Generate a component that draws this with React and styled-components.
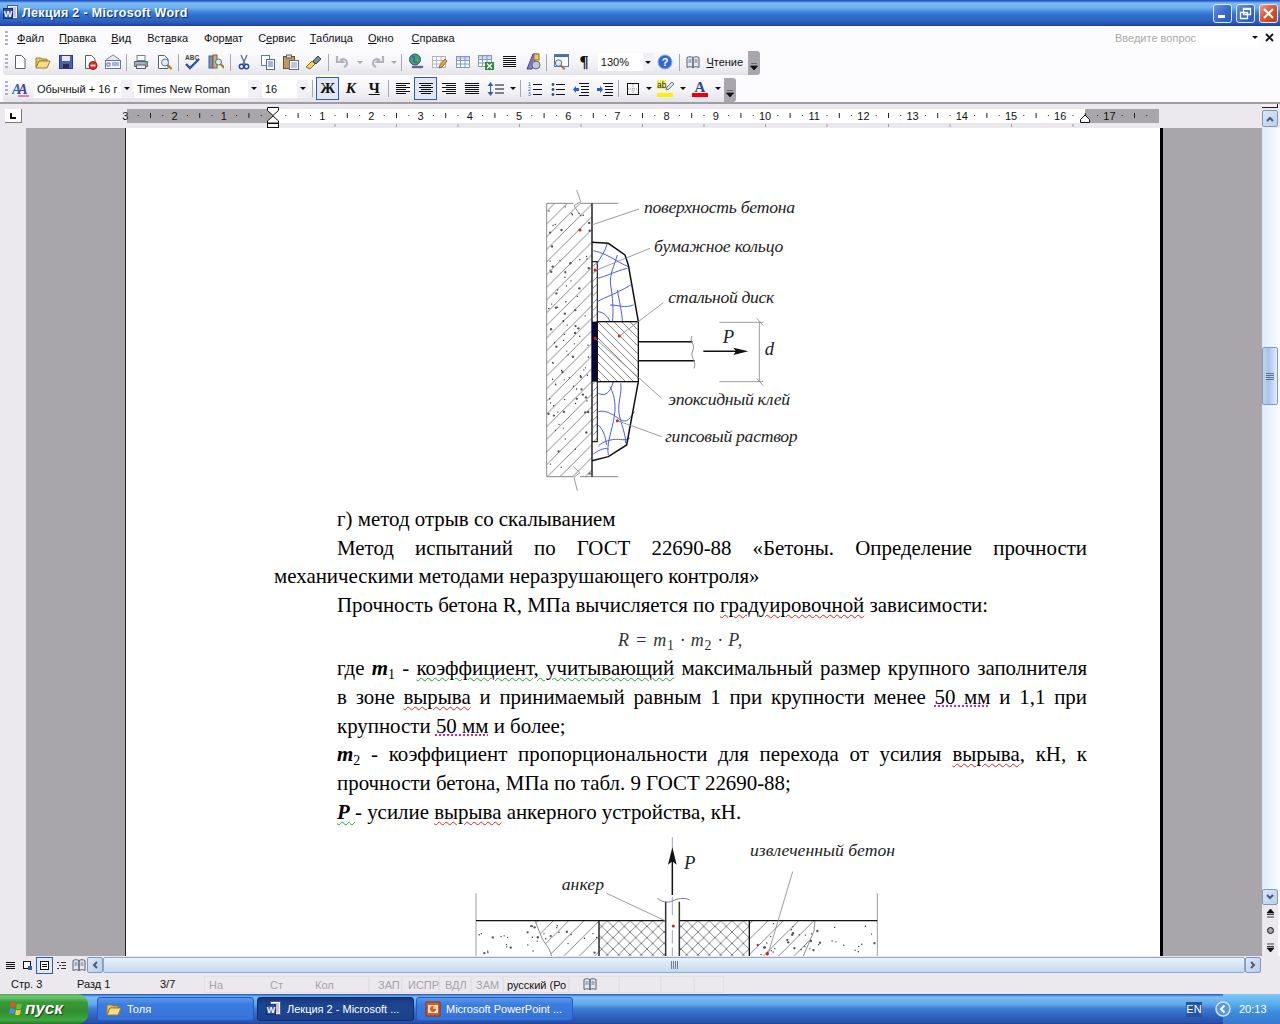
import React from "react";
import styled, { createGlobalStyle } from "styled-components";

const Global = createGlobalStyle`
  html, body { margin: 0; padding: 0; overflow: hidden; background: #ebe9ed; }
`;

const uiFont = `"Liberation Sans", Arial, sans-serif`;
const serif = `"Liberation Serif", "Times New Roman", serif`;

const Win = styled.div`
  width: 1280px;
  height: 1024px;
  display: flex;
  flex-direction: column;
  overflow: hidden;
  font-family: ${uiFont};
  font-size: 11px;
  color: #111;
`;

/* title bar */
const TitleBar = styled.div`
  height: 26px;
  flex: none;
  display: flex;
  align-items: center;
  padding: 0 2px 0 3px;
  box-sizing: border-box;
  background: linear-gradient(180deg, #2150c0 0, #2c62d0 1px, #7cbcf0 3px, #6cb0ec 8px, #3e86dc 12px, #3070cc 15px, #2c62c0 21px, #2850b0 24px, #1c3c9c 26px);
`;
const TitleText = styled.div`
  margin-left: 3px;
  font: bold 12.5px "Liberation Sans", sans-serif;
  letter-spacing: 0.32px;
  color: #fff;
  text-shadow: 1px 1px 0 #0f2c80;
  flex: 1;
`;
const WinBtn = styled.div`
  width: 19px;
  height: 19px;
  margin-left: 4px;
  border: 1px solid #dfe8fa;
  border-radius: 3px;
  box-sizing: border-box;
  display: flex;
  align-items: center;
  justify-content: center;
  background: ${(p) =>
    p.$close
      ? "linear-gradient(135deg, #f0a088, #d85a30 45%, #b83c18)"
      : "linear-gradient(135deg, #6c94e4, #3a6cd0 50%, #2c56b8)"};
`;

/* menu */
const MenuBar = styled.div`
  height: 25px;
  flex: none;
  box-sizing: border-box;
  padding: 0 0 2px 5px;
  display: flex;
  align-items: center;
  background: #fcfbfe;
`;
const Grip = styled.div`
  width: 3px;
  height: ${(p) => p.$h || 14}px;
  flex: none;
  background: repeating-linear-gradient(180deg, #b4b2ba 0 2px, transparent 2px 4px);
`;
const MenuItem = styled.span`
  margin-left: ${(p) => p.$ml}px;
  u { text-underline-offset: 1px; }
`;
const MenuSpacer = styled.div`
  flex: 1;
`;
const HelpBox = styled.div`
  width: 147px;
  height: 18px;
  background: #fff;
  display: flex;
  align-items: center;
  box-sizing: border-box;
  padding-left: 2px;
  color: #a8a8a8;
`;
const HelpText = styled.span`
  flex: 1;
`;
const CloseDoc = styled.div`
  width: 20px;
  height: 18px;
  display: flex;
  align-items: center;
  justify-content: center;
`;

/* toolbars */
const BarRow = styled.div`
  height: ${(p) => p.$h}px;
  flex: none;
  box-sizing: border-box;
  padding-top: ${(p) => p.$pt || 0}px;
  background: #fcfbfe;
  display: flex;
  align-items: flex-start;
`;
const Toolbar = styled.div`
  height: 24px;
  width: ${(p) => p.$w}px;
  margin-left: 3px;
  box-sizing: border-box;
  padding: 0 0 ${(p) => p.$pb || 0}px 2px;
  display: flex;
  align-items: center;
  background: linear-gradient(180deg, #fbfbfd 0%, #f3f2f6 55%, #e4e3e9 100%);
  border-radius: 3px 0 0 3px;
  position: relative;
`;
const ToolBtn = styled.div`
  width: ${(p) => p.$w || 23.3}px;
  height: 23px;
  flex: none;
  box-sizing: border-box;
  display: flex;
  align-items: center;
  justify-content: center;
  ${(p) => p.$on && "border: 1px solid #2f5ea8; background: #e1e6f2;"}
  ${(p) => p.$ml && `margin-left: ${p.$ml}px;`}
`;
const Sep = styled.div`
  width: ${(p) => p.$w || 5}px;
  height: 17px;
  flex: none;
  background: linear-gradient(#a9a8ae, #a9a8ae) center / 1px 100% no-repeat;
`;
const Arrow = styled.div`
  width: ${(p) => p.$w || 11}px;
  height: 14px;
  flex: none;
  display: flex;
  align-items: center;
  justify-content: center;
  &::after {
    content: "";
    border-left: 3px solid transparent;
    border-right: 3px solid transparent;
    border-top: 3px solid ${(p) => (p.$off ? "#a8a8ae" : "#111")};
  }
`;
const Combo = styled.div`
  width: ${(p) => p.$w}px;
  height: 18px;
  flex: none;
  margin-left: ${(p) => p.$ml || 0}px;
  box-sizing: border-box;
  background: #fff;
  display: flex;
  align-items: center;
  padding-left: 3px;
`;
const ComboText = styled.span`
  flex: 1;
  white-space: nowrap;
`;
const ComboArrow = styled(Arrow)`
  height: 18px;
  background: #f1f0f4;
`;
const Chevron = styled.div`
  position: absolute;
  right: -12px;
  top: 0;
  bottom: 0;
  width: 12px;
  border-radius: 0 3px 3px 0;
  background: #a9a7ad;
  display: flex;
  align-items: flex-end;
  justify-content: center;
  padding-bottom: 4px;
  box-sizing: border-box;
`;
const ReadText = styled.span`
  margin-left: 1px;
  white-space: nowrap;
`;
const GlyphBold = styled.span`
  font: ${(p) => p.$style || "bold"} 15px ${serif};
  ${(p) => p.$u && "text-decoration: underline; text-underline-offset: 1px;"}
`;
const Pilcrow = styled.span`
  font: bold 17px ${serif};
`;

/* ruler */
const RulerRow = styled.div`
  height: 26px;
  flex: none;
  position: relative;
  background: #ebe9ed;
  border-top: 2px solid #a09ea4;
  box-sizing: border-box;
`;
const RulerLayout = styled.div`
  display: flex;
  padding: 5px 0 0 5px;
`;
const TabCorner = styled.div`
  width: 17px;
  height: 14px;
  background: #fff;
  border-bottom: 1px solid #777;
  border-right: 1px solid #777;
  box-sizing: border-box;
  display: flex;
  align-items: center;
  justify-content: center;
`;
const RulerBand = styled.div`
  width: ${(p) => p.$w}px;
  height: 14px;
  margin-left: ${(p) => p.$ml || 0}px;
  background: ${(p) => (p.$gray ? "#a8a6aa" : "#fff")};
`;
const RulerMarks = styled.svg`
  position: absolute;
  left: 0;
  top: 0;
`;
const SplitBox = styled.div`
  position: absolute;
  right: 2px;
  top: 0;
  width: 16px;
  height: 4px;
  background: #f2f1f5;
  border-right: 1px solid #222;
  border-bottom: 1px solid #222;
  box-sizing: border-box;
`;
const ScrollBtn = styled.div`
  width: 16px;
  height: ${(p) => p.$h || 16}px;
  flex: none;
  box-sizing: border-box;
  border: 1px solid #8298b8;
  border-radius: 2px;
  background: linear-gradient(135deg, #dbe7f8, #b8cfea);
  display: flex;
  align-items: center;
  justify-content: center;
`;
const RulerScrollBtn = styled(ScrollBtn)`
  position: absolute;
  right: 2px;
  top: 6px;
  height: 17px;
`;

/* main area */
const Main = styled.div`
  height: 828px;
  flex: none;
  display: flex;
`;
const LeftStrip = styled.div`
  width: 26px;
  flex: none;
  background: #ebe9ed;
`;
const DocArea = styled.div`
  flex: 1;
  background: #a8a6aa;
  padding-left: 99px;
  overflow: hidden;
`;
const Page = styled.div`
  width: 1038px;
  height: 100%;
  box-sizing: border-box;
  background: #fff;
  border-left: 1px solid #222;
  border-right: 3px solid #000;
  padding: 62px 0 0 148px;
  overflow: hidden;
`;
const Figure = styled.svg`
  display: block;
  margin-left: ${(p) => p.$ml}px;
  margin-top: ${(p) => p.$mt || 0}px;
`;
const TextBlock = styled.div`
  width: 813px;
  margin-top: ${(p) => p.$mt || 0}px;
  font-family: ${serif};
  font-size: 20.9px;
  color: #000;
`;
const Line = styled.div`
  height: 28.7px;
  line-height: 28.7px;
  padding-left: ${(p) => (p.$indent ? 63 : 0)}px;
  text-align: ${(p) => (p.$just ? "justify" : "left")};
  text-align-last: ${(p) => (p.$just ? "justify" : "left")};
`;
const FormulaLine = styled.div`
  height: 34.5px;
  line-height: 38px;
  text-align: center;
`;
const FormulaText = styled.span`
  font-size: 18px;
  font-style: italic;
  color: #333;
  letter-spacing: 0.8px;
`;
const Var = styled.i`
  font-weight: bold;
`;
const Sub = styled.sub`
  font-size: 14px;
  line-height: 0;
  vertical-align: -4px;
  font-style: normal;
  font-weight: normal;
`;
const Wavy = styled.span`
  text-decoration: underline wavy ${(p) => p.$c};
  text-decoration-thickness: 1px;
  text-underline-offset: 2px;
`;
const Dotted = styled.span`
  text-decoration: underline dotted #d020d0;
  text-underline-offset: 2px;
`;

/* scrollbars */
const VScroll = styled.div`
  width: 18px;
  flex: none;
  box-sizing: border-box;
  padding-right: 2px;
  display: flex;
  flex-direction: column;
  background: linear-gradient(90deg, #dfeafa, #fbfdff);
`;
const VTrack = styled.div`
  height: ${(p) => (p.$h ? `${p.$h}px` : "auto")};
  flex: ${(p) => (p.$h ? "none" : 1)};
`;
const VThumb = styled.div`
  height: 58px;
  flex: none;
  box-sizing: border-box;
  border: 1px solid #8298b8;
  border-radius: 2px;
  background: linear-gradient(90deg, #c0d4ee, #a8c4e8 40%, #e4eefa);
  display: flex;
  align-items: center;
  justify-content: center;
`;
const NavBtn = styled.div`
  height: 17px;
  flex: none;
  background: #ebe9ed;
  display: flex;
  align-items: center;
  justify-content: center;
`;
const HScroll = styled.div`
  height: 18px;
  flex: none;
  display: flex;
  align-items: center;
  background: #ebe9ed;
`;
const ViewBtn = styled.div`
  width: 17px;
  height: 17px;
  flex: none;
  box-sizing: border-box;
  display: flex;
  align-items: center;
  justify-content: center;
  ${(p) => p.$on && "border: 1px solid #2f5ea8; background: #e4e8f4;"}
`;
const ViewIcons = styled.div`
  display: flex;
  align-items: center;
  padding-left: 2px;
  width: 87px;
  box-sizing: border-box;
`;
const HThumb = styled.div`
  flex: 1;
  height: 16px;
  box-sizing: border-box;
  border: 1px solid #92a8c8;
  border-radius: 2px;
  background: linear-gradient(180deg, #eaf2fc, #c4d8f0);
  display: flex;
  align-items: center;
  justify-content: center;
`;
const HEnd = styled.div`
  width: 19px;
  flex: none;
`;

/* status bar */
const StatusBar = styled.div`
  height: 20px;
  flex: none;
  display: flex;
  align-items: center;
  background: #ebe9ed;
`;
const StatusCell = styled.div`
  width: ${(p) => p.$w}px;
  height: 17px;
  flex: none;
  box-sizing: border-box;
  padding-left: ${(p) => p.$pl || 0}px;
  line-height: 17px;
  white-space: nowrap;
  color: ${(p) => (p.$off ? "#a4a4a8" : "#111")};
  ${(p) => p.$box && "border: 1px solid #e3e1e6;"}
  display: flex;
`;
const StatusPart = styled.span`
  width: ${(p) => p.$w}px;
  flex: none;
`;

/* taskbar */
const Taskbar = styled.div`
  height: 30px;
  flex: none;
  display: flex;
  align-items: center;
  background: linear-gradient(180deg, #2a50b0 0, #3a78d8 1px, #7cbef0 3px, #62a8e8 10px, #3c7cd4 15px, #2c5cb8 24px, #2850a8 29px, #1c3c90 30px);
`;
const StartBtn = styled.div`
  width: 88px;
  height: 30px;
  flex: none;
  box-sizing: border-box;
  padding-left: 8px;
  display: flex;
  align-items: center;
  gap: 0;
  border-radius: 0 10px 10px 0;
  background: linear-gradient(180deg, #5ea85e 0, #6cc86c 3px, #3a9a3a 8px, #2f8f2f 18px, #40a840 26px, #287828 30px);
  color: #fff;
  font: italic bold 17px "Liberation Sans", sans-serif;
  text-shadow: 1px 1px 1px #14401a;
`;
const TaskBtn = styled.div`
  width: 157px;
  height: 24px;
  flex: none;
  margin-left: ${(p) => p.$ml}px;
  box-sizing: border-box;
  padding-left: 8px;
  display: flex;
  align-items: center;
  gap: 5px;
  border-radius: 3px;
  white-space: nowrap;
  color: #fff;
  background: ${(p) =>
    p.$active
      ? "linear-gradient(180deg, #16357c, #1e4690 30%, #1c4089)"
      : "linear-gradient(180deg, #5a98ec, #3c7ce0 30%, #3672d8)"};
  border: 1px solid ${(p) => (p.$active ? "#122c68" : "#2a5ac0")};
`;
const TaskSpacer = styled.div`
  flex: 1;
`;
const LangBadge = styled.div`
  width: 16px;
  height: 15px;
  margin-right: 21px;
  background: #2454a8;
  color: #fff;
  text-align: center;
  line-height: 15px;
`;
const Tray = styled.div`
  width: 57px;
  height: 30px;
  flex: none;
  position: relative;
  box-sizing: border-box;
  padding-left: 16px;
  color: #fff;
  line-height: 30px;
  background: linear-gradient(180deg, #7cc6f4 0, #58aeea 10px, #3c8cdc 18px, #3878d0 30px);
`;
const TrayChevron = styled.svg`
  position: absolute;
  left: -8px;
  top: 7px;
`;

/* small icons */
const Ico = ({ children, w = 16, h = 16 }) => (
  <svg width={w} height={h} viewBox={`0 0 ${w} ${h}`}>
    {children}
  </svg>
);

const DocShape = ({ x = 3, y = 1, w = 10, h = 14, fill = "#fff" }) => (
  <path
    d={`M${x + 0.5} ${y + 0.5}h${w - 4}l3.5 3.5V${y + h - 0.5}h-${w - 0.5}z`}
    fill={fill}
    stroke="#5a6070"
  />
);

const Lens = ({ x, y, r = 3 }) => (
  <g>
    <line x1={x + r - 1} y1={y + r - 1} x2={x + r + 3} y2={y + r + 3} stroke="#a87820" strokeWidth="2" />
    <circle cx={x} cy={y} r={r} fill="#d8ecfa" stroke="#5a7090" />
  </g>
);

const Folder = () => (
  <Ico>
    <path d="M1 4h5l1 1h5v2H4L1 13z" fill="#e8c860" stroke="#a08020" />
    <path d="M4 7h11l-3 7H1z" fill="#f4dc88" stroke="#a08020" />
  </Ico>
);
const Floppy = () => (
  <Ico>
    <rect x="1.5" y="1.5" width="13" height="13" fill="#4a60b8" stroke="#2c3c88" />
    <rect x="4" y="2" width="8" height="5" fill="#e4e8f4" />
    <rect x="5" y="10" width="6" height="4" fill="#2a2f50" />
  </Ico>
);
const PermDoc = () => (
  <Ico>
    <DocShape />
    <circle cx="11" cy="11.5" r="4" fill="#e03020" stroke="#a01810" />
    <rect x="8.5" y="10.7" width="5" height="1.6" fill="#fff" />
  </Ico>
);
const Mail = () => (
  <Ico w={18} h={16}>
    <path d="M3 5l6-4 6 4v2H3z" fill="#e8e8f0" stroke="#808898" />
    <rect x="1.5" y="6.5" width="15" height="8" fill="#f6f6fa" stroke="#6a7490" />
    <path d="M8 9h7M8 11h7M3 9h3v3H3z" stroke="#5a78b0" fill="none" />
  </Ico>
);
const Printer = () => (
  <Ico>
    <rect x="4" y="1.5" width="8" height="5" fill="#fff" stroke="#7a8090" />
    <path d="M1.5 7.5h13v5h-13z" fill="#a8b0bc" stroke="#5a6070" />
    <rect x="3.5" y="11" width="9" height="3.5" fill="#e8eaf0" stroke="#5a6070" />
    <rect x="11.5" y="8.5" width="2" height="1" fill="#30c030" />
  </Ico>
);
const Preview = () => (
  <Ico>
    <DocShape x={2} />
    <Lens x={9} y={8.5} r={3.5} />
  </Ico>
);
const Spell = () => (
  <Ico w={18} h={16}>
    <text x="1" y="6" fontSize="6.5" fontWeight="bold" fontFamily="Liberation Sans" fill="#444">ABC</text>
    <path d="M2 10l4 4 9-9" fill="none" stroke="#2c50b0" strokeWidth="2.4" />
  </Ico>
);
const Research = () => (
  <Ico>
    <rect x="1" y="2" width="4" height="12" fill="#7890c0" stroke="#4a5a90" />
    <rect x="5" y="1" width="4" height="13" fill="#c8b070" stroke="#806830" />
    <Lens x={10.5} y={8} r={3} />
  </Ico>
);
const Scissors = () => (
  <Ico>
    <path d="M5 1l4 9M11 1L7 10" stroke="#6a7488" strokeWidth="1.4" />
    <circle cx="5.5" cy="12.5" r="2.2" fill="none" stroke="#2448a8" strokeWidth="1.4" />
    <circle cx="10.5" cy="12.5" r="2.2" fill="none" stroke="#2448a8" strokeWidth="1.4" />
  </Ico>
);
const Copy = () => (
  <Ico>
    <rect x="1.5" y="1.5" width="8" height="10" fill="#fff" stroke="#5a78b8" />
    <rect x="6.5" y="5.5" width="8" height="10" fill="#fff" stroke="#4a68a8" />
    <path d="M8 8h5M8 10h5M8 12h5" stroke="#4a68b0" />
  </Ico>
);
const Paste = () => (
  <Ico w={18} h={16}>
    <rect x="1.5" y="2.5" width="11" height="12" fill="#c09a58" stroke="#705020" />
    <rect x="4.5" y="1" width="5" height="3" fill="#d8d8e0" stroke="#606070" />
    <rect x="7.5" y="6.5" width="9" height="9" fill="#fff" stroke="#606880" />
    <path d="M9 9h6M9 11h6M9 13h6" stroke="#8090b0" />
  </Ico>
);
const Painter = () => (
  <Ico w={18} h={16}>
    <path d="M1 13l6-6 3 3-5 5z" fill="#f0d060" stroke="#907020" />
    <path d="M8 7l5-5 3 3-5 5z" fill="#808898" stroke="#404858" />
  </Ico>
);
const Undo = ({ flip }) => (
  <Ico>
    <g transform={flip ? "translate(16 0) scale(-1 1)" : undefined}>
      <path d="M2 2v6h6L6 6c3-2 6 0 6 3 0 2-1 3-3 4" fill="none" stroke="#b2b4bc" strokeWidth="2.2" />
    </g>
  </Ico>
);
const Globe = () => (
  <Ico w={18} h={18}>
    <circle cx="8" cy="6.5" r="5.5" fill="#4aa068" stroke="#2c5a80" />
    <path d="M5 3c2 1 3 2 2 4s2 3 3 2" stroke="#2468c0" fill="none" strokeWidth="1.5" />
    <path d="M6 14h4M11 14h4" stroke="#606c80" strokeWidth="2.6" strokeLinecap="round" />
  </Ico>
);
const Grid = ({ c = "#8098c8", head = "#c4d4ee" }) => (
  <g>
    <rect x="1.5" y="2.5" width="13" height="11" fill="#fff" stroke={c} />
    <rect x="2" y="3" width="12" height="2.5" fill={head} />
    <path d="M1.5 6.5h13M1.5 10h13M5.5 3v10M10 3v10" stroke={c} />
  </g>
);
const TableDraw = () => (
  <Ico>
    <Grid c="#b0b4c0" head="#fff" />
    <path d="M8 14l1-3 5-6 2 2-5 6z" fill="#e8b040" stroke="#906820" />
  </Ico>
);
const TableIcon = () => (
  <Ico>
    <Grid />
  </Ico>
);
const ExcelIcon = () => (
  <Ico w={18} h={18}>
    <Grid />
    <rect x="8" y="9" width="9" height="8" fill="#2c8a3c" />
    <path d="M10 10.5l5 5M15 10.5l-5 5" stroke="#fff" strokeWidth="1.3" />
  </Ico>
);
const ColumnsIcon = () => (
  <Ico>
    <path d="M2 2.500h13M2 4.500h13M2 6.500h13M2 8.500h13M2 10.500h13M2 12.500h13" stroke="#111" />
  </Ico>
);
const DrawingIcon = () => (
  <Ico w={18} h={18}>
    <path d="M9 1l4 0 -5 15H3z" fill="#8878c8" stroke="#4a4090" />
    <rect x="10" y="1" width="5" height="6" fill="#f0c860" stroke="#907020" />
    <circle cx="12" cy="12" r="4" fill="#c4c8d4" stroke="#606878" />
  </Ico>
);
const DocMap = () => (
  <Ico w={18} h={16}>
    <rect x="2.5" y="0.5" width="14" height="12" fill="#fff" stroke="#5878a8" />
    <rect x="3" y="1" width="13" height="2" fill="#3c70c8" />
    <Lens x={6.5} y={9} r={3.2} />
  </Ico>
);
const HelpIcon = () => (
  <Ico>
    <circle cx="8" cy="8" r="7" fill="#3468d0" stroke="#8cb0e8" />
    <text x="8" y="12" textAnchor="middle" fontSize="11" fontWeight="bold" fontFamily="Liberation Sans" fill="#fff">?</text>
  </Ico>
);
const BookIcon = ({ w = 15 }) => (
  <Ico w={w} h={14}>
    <path d="M1 2.5c2-1 4-1 6 0v10c-2-1-4-1-6 0zM7 2.5c2-1 4-1 6 0v10c-2-1-4-1-6 0z" fill="#e4e8f0" stroke="#586070" />
    <path d="M2.500 5h3M2.500 7h3M8.500 5h3M8.500 7h3" stroke="#6a7488" />
  </Ico>
);
const StylesIcon = () => (
  <Ico w={18} h={18}>
    <text x="0" y="14" fontSize="14" fontWeight="bold" fontStyle="italic" fontFamily="Liberation Serif" letterSpacing="-3">
      <tspan fill="#3464b0">A</tspan>
      <tspan fill="#483c98">A</tspan>
    </text>
    <rect x="6" y="15.500" width="11" height="1" fill="#a02890" />
  </Ico>
);
const Align = ({ rows }) => (
  <Ico>
    {rows.map(([x, w], i) => (
      <rect key={i} x={x} y={2 + i * 2} width={w} height="1" fill="#111" />
    ))}
  </Ico>
);
const Spacing = () => (
  <Ico w={18} h={16}>
    <path d="M3.500 1l-3 4h6zM3.500 15l-3-4h6z" fill="#2c60c0" />
    <rect x="3" y="5" width="1" height="6" fill="#2c60c0" />
    <path d="M8 4h9M8 8h9M8 12h9" stroke="#111" />
  </Ico>
);
const Numbered = () => (
  <Ico>
    <text x="1" y="5" fontSize="5" fontFamily="Liberation Sans" fill="#2c60c0">1</text>
    <text x="1" y="10" fontSize="5" fontFamily="Liberation Sans" fill="#2c60c0">2</text>
    <text x="1" y="15" fontSize="5" fontFamily="Liberation Sans" fill="#2c60c0">3</text>
    <path d="M6 3.500h9M6 8.500h9M6 13.500h9" stroke="#111" />
  </Ico>
);
const Bullets = () => (
  <Ico>
    <circle cx="3" cy="3.500" r="1.400" fill="#2c5090" />
    <circle cx="3" cy="8.500" r="1.400" fill="#2c5090" />
    <circle cx="3" cy="13.500" r="1.400" fill="#2c5090" />
    <path d="M6 3.500h9M6 8.500h9M6 13.500h9" stroke="#111" />
  </Ico>
);
const Indent = ({ inc }) => (
  <Ico>
    <path d="M6 2.500h10M8 5.500h8M8 8.500h8M8 11.500h8M6 14.500h10" stroke="#111" />
    <path d={inc ? "M0 7h3V5l3 3.500-3 3.500v-2H0z" : "M6 7H3V5L0 8.500 3 12v-2h3z"} fill="#2c60c0" />
  </Ico>
);
const Borders = () => (
  <Ico>
    <rect x="2.500" y="2.500" width="11" height="11" fill="none" stroke="#111" />
    <path d="M8 3v10M3 8h10" stroke="#999" strokeDasharray="1 1" />
  </Ico>
);
const Highlight = () => (
  <Ico w={18} h={17}>
    <rect x="0" y="0" width="9" height="9" fill="#f0f060" />
    <text x="0" y="8" fontSize="8.500" fontFamily="Liberation Sans" fill="#222">ab</text>
    <path d="M9 10l1-3 5-5 2 2-5 5z" fill="#dfe4f0" stroke="#6a7488" />
    <rect x="0" y="13" width="16" height="4" fill="#fff000" />
  </Ico>
);
const FontColor = () => (
  <Ico w={18} h={17}>
    <text x="8" y="12" textAnchor="middle" fontSize="15" fontWeight="bold" fontFamily="Liberation Serif" fill="#2c4a90">A</text>
    <rect x="0" y="13" width="16" height="4" fill="#f00000" />
  </Ico>
);
const ChevronMark = () => (
  <Ico w={8} h={8}>
    <path d="M1 0h6M0.500 3h7l-3.500 4z" stroke="#111" fill="#111" strokeWidth="0.800" />
  </Ico>
);
const ScrollArrow = ({ dir }) => {
  const paths = {
    up: "M2 7l3-3 3 3",
    down: "M2 3l3 3 3-3",
    left: "M7 2L4 5l3 3",
    right: "M3 2l3 3-3 3",
  };
  return (
    <Ico w={10} h={10}>
      <path d={paths[dir]} fill="none" stroke="#4a5a78" strokeWidth="2" />
    </Ico>
  );
};
const WordIcon = ({ s = 16 }) => (
  <svg width={s} height={s} viewBox="0 0 16 16">
    <rect x="4.500" y="0.500" width="10" height="13" fill="#f4f6fc" stroke="#4a5a98" />
    <path d="M7 3h6M7 5h6M7 7h6M7 9h6M7 11h6" stroke="#8898c8" />
    <rect x="0.500" y="3.500" width="9" height="10" fill="#2c4ea8" stroke="#1c2c78" />
    <text x="5" y="12" textAnchor="middle" fontSize="9" fontWeight="bold" fontFamily="Liberation Sans" fill="#fff">W</text>
  </svg>
);
const PptIcon = () => (
  <Ico>
    <rect x="1" y="1" width="14" height="14" fill="#d85a28" stroke="#903010" />
    <rect x="3" y="4" width="10" height="8" fill="#f4e4d4" />
    <circle cx="8" cy="8" r="3" fill="#d85a28" />
    <path d="M8 8V5a3 3 0 0 1 3 3z" fill="#f0c040" />
  </Ico>
);
const FlagIcon = () => (
  <Ico w={17} h={18}>
    <path d="M3 3c2-1 3-1 5 0l-1 5c-2-1-3-1-5 0z" fill="#e85030" />
    <path d="M9 3.500c2 1 3 1 5 0l-1 5c-2 1-3 1-5 0z" fill="#60c040" />
    <path d="M2 9c2-1 3-1 5 0l-1 5c-2-1-3-1-5 0z" fill="#4890e8" />
    <path d="M8 9.500c2 1 3 1 5 0l-1 5c-2 1-3 1-5 0z" fill="#f8c830" />
  </Ico>
);

/* ruler drawing */
const RULER_ZERO = 273;
const RULER_STEP = 49.2;
const RulerDrawing = () => {
  const nums = [];
  const ticks = [];
  for (let i = -3; i <= 17; i++) {
    const x = RULER_ZERO + i * RULER_STEP;
    if (i !== 0) {
      nums.push(
        <text key={i} x={x} y="14.500" textAnchor="middle" fontSize="11" fontFamily="Liberation Sans" fill="#111">
          {Math.abs(i)}
        </text>
      );
    }
    if (x + 37 < 1159) {
      ticks.push(<rect key={`a${i}`} x={x + 12.3} y="10" width="1" height="1" fill="#222" />);
      ticks.push(<rect key={`b${i}`} x={x + 24.6} y="8" width="1" height="5" fill="#222" />);
      ticks.push(<rect key={`c${i}`} x={x + 36.9} y="10" width="1" height="1" fill="#222" />);
    }
  }
  const tabs = [];
  for (let i = 1; i <= 13; i++) {
    tabs.push(<rect key={i} x={RULER_ZERO + i * 61.5} y="19" width="1" height="3" fill="#a0a0a4" />);
  }
  return (
    <RulerMarks width="1262" height="24">
      <g transform="translate(0 1)">
        {nums}
        {ticks}
        {tabs}
        <path d="M267.500 2.500h11v3l-5.500 5-5.500-5z" fill="#fff" stroke="#111" />
        <path d="M273 11l5.500 5v2h-11v-2z" fill="#fff" stroke="#111" />
        <rect x="267.500" y="18.500" width="11" height="4" fill="#fff" stroke="#111" />
        <path d="M1080.500 17.500v-3l4.500-4.500 4.500 4.500v3z" fill="#fff" stroke="#111" />
      </g>
    </RulerMarks>
  );
};

/* diagrams */
const rnd = (seed) => {
  let s = seed;
  return () => {
    s = (s * 9301 + 49297) % 233280;
    return s / 233280;
  };
};
const Dots = ({ x, y, w, h, n, seed }) => {
  const r = rnd(seed);
  const out = [];
  for (let i = 0; i < n; i++) {
    const px = x + r() * w;
    const py = y + r() * h;
    const big = r() > 0.7;
    out.push(<circle key={i} cx={px} cy={py} r={big ? 3.5 : 2} fill={big ? "#555" : "#222"} />);
  }
  return <g>{out}</g>;
};
const RedDot = ({ x, y }) => <circle cx={x} cy={y} r="4.500" fill="#f01010" />;
const Label = ({ x, y, len, size = 53, children }) => (
  <text x={x} y={y} fontSize={size} fontStyle="italic" fontFamily="Liberation Serif" fill="#222" textLength={len} lengthAdjust="spacing">
    {children}
  </text>
);

const HatchDefs = ({ id, size, dir, sw = 2.4, c = "#666" }) => (
  <pattern id={id} patternUnits="userSpaceOnUse" width={size} height={size}>
    {dir > 0 ? (
      <line x1="0" y1={size} x2={size} y2="0" stroke={c} strokeWidth={sw} />
    ) : (
      <line x1="0" y1="0" x2={size} y2={size} stroke={c} strokeWidth={sw} />
    )}
  </pattern>
);

const PullOffFigure = () => (
  <Figure $ml={256} width="290" height="310" viewBox="0 0 870 930">
    <defs>
      <HatchDefs id="wallHatch" size={38} dir={1} />
      <HatchDefs id="ringHatch" size={22} dir={1} />
      <HatchDefs id="discHatch" size={24} dir={-1} />
    </defs>
    <rect x="50" y="40" width="136" height="820" fill="url(#wallHatch)" />
    <Dots x={55} y={45} w={125} h={810} n={100} seed={11} />
    <path d="M50 40V860" stroke="#777" strokeWidth="2.500" fill="none" />
    <path d="M50 40H130M150 40H265M50 860H130M150 860H265" stroke="#888" strokeWidth="3" fill="none" />
    <path d="M140 0l12 35-20 12 16 25M130 830l20 18-18 14 10 40" stroke="#888" strokeWidth="2.500" fill="none" />
    <path d="M186 40V860" stroke="#222" strokeWidth="4.500" fill="none" />
    <rect x="187" y="215" width="15" height="180" fill="url(#ringHatch)" />
    <rect x="187" y="575" width="15" height="180" fill="url(#ringHatch)" />
    <rect x="186" y="395" width="16" height="180" fill="#06063c" />
    <path d="M186 215H202V395M186 755H202V575" stroke="#222" strokeWidth="3.500" fill="none" />
    <path
      d="M190 182c25 5 50 18 70 30s30 15 38 20M232 160c-5 25-25 45-32 65M262 195c-8 30-25 60-20 90s10 80 5 110M202 265c25-5 50-20 90-30M202 335c25-15 50-20 100-50M240 345c25 0 45 10 70 0M262 300c5 30 15 70 15 95M202 365c15 0 30 10 38 30M205 610c20 10 35 0 45-35M205 665c20-5 40 5 60 20s30 10 48-20M240 590c15 30 20 60 10 105s-20 70-15 100M272 580c5 30-10 60-5 90s20 60 20 90M205 705c15 15 20 30 25 60M205 768c15-15 40-20 55-20s30 5 40-5M190 792c15-10 30-20 45-15"
      fill="none"
      stroke="#4a5ce8"
      strokeWidth="3"
    />
    <path d="M186 157l49 3 50 35 10 30 30 170M325 575l-35 190-55 35-49 12" stroke="#111" strokeWidth="4.500" fill="none" />
    <rect x="202" y="395" width="123" height="180" fill="#fff" />
    <rect x="202" y="395" width="123" height="180" fill="url(#discHatch)" stroke="#111" strokeWidth="4" />
    <path d="M325 455H487M325 512H494" stroke="#111" strokeWidth="4.500" fill="none" />
    <path d="M486 438c-10 15 12 25 2 45s14 30 4 52" stroke="#777" strokeWidth="2.500" fill="none" />
    <path d="M520 484H625" stroke="#111" strokeWidth="4.500" />
    <path d="M655 484l-45-11 8 11-8 11z" fill="#111" />
    <path d="M568 397H700M568 575H700M688 397V575M680 385l20 22M680 565l20 22" stroke="#888" strokeWidth="2.500" fill="none" />
    <text x="578" y="458" fontSize="56" fontStyle="italic" fontFamily="Liberation Serif" fill="#222">P</text>
    <text x="704" y="494" fontSize="56" fontStyle="italic" fontFamily="Liberation Serif" fill="#222">d</text>
    <path d="M185 105L327 57M200 240L360 175M268 438L400 338M195 445L395 625M262 692L395 740" stroke="#888" strokeWidth="2.500" fill="none" />
    <RedDot x={150} y={120} />
    <RedDot x={195} y={240} />
    <RedDot x={195} y={445} />
    <RedDot x={268} y={438} />
    <RedDot x={262} y={692} />
    <Label x={342} y={69} len={453}>поверхность бетона</Label>
    <Label x={372} y={186} len={388}>бумажное кольцо</Label>
    <Label x={415} y={340} len={318}>стальной диск</Label>
    <Label x={415} y={646} len={365}>эпоксидный клей</Label>
    <Label x={405} y={756} len={398}>гипсовый раствор</Label>
  </Figure>
);

const AnchorFigure = () => (
  <Figure $ml={186} $mt={4} width="450" height="126" viewBox="0 0 1350 378">
    <defs>
      <HatchDefs id="sHatch" size={46} dir={1} />
      <pattern id="crossHatch" patternUnits="userSpaceOnUse" width="34" height="34">
        <path d="M0 0L34 34M34 0L0 34" stroke="#555" strokeWidth="2.200" />
      </pattern>
    </defs>
    <path d="M225 272l22 55 20 30 8 21H417V272z" fill="url(#sHatch)" />
    <path d="M868 272V378H1030l32-75 3-31z" fill="url(#sHatch)" />
    <path d="M225 272l22 55 20 30 8 21M1065 272l-3 31-32 75" stroke="#777" strokeWidth="2.500" fill="none" />
    <Dots x={55} y={280} w={360} h={95} n={34} seed={7} />
    <Dots x={875} y={280} w={370} h={95} n={40} seed={23} />
    <rect x="417" y="272" width="200" height="106" fill="url(#crossHatch)" />
    <rect x="658" y="272" width="210" height="106" fill="url(#crossHatch)" />
    <path d="M48 190V378M1252 190V378" stroke="#888" strokeWidth="2.500" fill="none" />
    <path d="M48 272H617M658 272H1252M417 272V378M868 272V378" stroke="#111" strokeWidth="4" fill="none" />
    <path d="M617 215V378M658 215V378" stroke="#333" strokeWidth="4.500" fill="none" />
    <path d="M592 205c12 10 30 15 45 8s35-12 52-3" stroke="#666" strokeWidth="2.500" fill="none" />
    <path d="M637 22V60M637 200V255M637 300V340M637 352V378" stroke="#8888ee" strokeWidth="2.500" fill="none" />
    <path d="M637 90V195" stroke="#111" strokeWidth="4.500" />
    <path d="M637 52l-13 52 13-10 13 10z" fill="#111" />
    <path d="M440 190L615 272M998 125L925 370" stroke="#888" strokeWidth="2.500" fill="none" />
    <RedDot x={640} y={288} />
    <RedDot x={922} y={372} />
    <text x="672" y="118" fontSize="56" fontStyle="italic" fontFamily="Liberation Serif" fill="#222">P</text>
    <Label x={305} y={180} len={127}>анкер</Label>
    <Label x={870} y={78} len={435}>извлеченный бетон</Label>
  </Figure>
);

const Menu = [
  ["", "Ф", "айл", 9],
  ["", "П", "равка", 15],
  ["", "В", "ид", 15],
  ["Вст", "а", "вка", 16],
  ["Фор", "м", "ат", 16],
  ["С", "е", "рвис", 15],
  ["", "Т", "аблица", 14],
  ["", "О", "кно", 15],
  ["", "С", "правка", 18],
];

export default function App() {
  return (
    <Win>
      <Global />
      <TitleBar>
        <WordIcon />
        <TitleText>Лекция 2 - Microsoft Word</TitleText>
        <WinBtn>
          <Ico w={11} h={11}>
            <rect x="1" y="7" width="7" height="3" fill="#fff" />
          </Ico>
        </WinBtn>
        <WinBtn>
          <Ico w={13} h={13}>
            <path d="M4.500 1.500h7v6h-7zM1.500 5.500h7v6h-7z" fill="none" stroke="#fff" strokeWidth="1.300" />
            <rect x="4" y="1" width="8" height="2" fill="#fff" />
          </Ico>
        </WinBtn>
        <WinBtn $close>
          <Ico w={13} h={13}>
            <path d="M2 2l9 9M11 2l-9 9" stroke="#fff" strokeWidth="2.200" />
          </Ico>
        </WinBtn>
      </TitleBar>

      <MenuBar>
        <Grip />
        {Menu.map(([a, k, b, ml]) => (
          <MenuItem key={a + k + b} $ml={ml}>
            {a}
            <u>{k}</u>
            {b}
          </MenuItem>
        ))}
        <MenuSpacer />
        <HelpBox>
          <HelpText>Введите вопрос</HelpText>
          <Arrow />
        </HelpBox>
        <CloseDoc>
          <Ico w={10} h={10}>
            <path d="M1 1l7 7M8 1L1 8" stroke="#111" strokeWidth="1.800" />
          </Ico>
        </CloseDoc>
      </MenuBar>

      <BarRow $h={26}>
        <Toolbar $w={745} $pb={2}>
          <Grip $h={16} />
          <ToolBtn><Ico><DocShape /></Ico></ToolBtn>
          <ToolBtn><Folder /></ToolBtn>
          <ToolBtn><Floppy /></ToolBtn>
          <ToolBtn><PermDoc /></ToolBtn>
          <ToolBtn><Mail /></ToolBtn>
          <Sep />
          <ToolBtn><Printer /></ToolBtn>
          <ToolBtn><Preview /></ToolBtn>
          <Sep />
          <ToolBtn><Spell /></ToolBtn>
          <ToolBtn><Research /></ToolBtn>
          <Sep />
          <ToolBtn><Scissors /></ToolBtn>
          <ToolBtn><Copy /></ToolBtn>
          <ToolBtn><Paste /></ToolBtn>
          <ToolBtn><Painter /></ToolBtn>
          <Sep />
          <ToolBtn><Undo /></ToolBtn>
          <Arrow $off />
          <ToolBtn><Undo flip /></ToolBtn>
          <Arrow $off />
          <Sep />
          <ToolBtn><Globe /></ToolBtn>
          <ToolBtn><TableDraw /></ToolBtn>
          <ToolBtn><TableIcon /></ToolBtn>
          <ToolBtn><ExcelIcon /></ToolBtn>
          <ToolBtn><ColumnsIcon /></ToolBtn>
          <ToolBtn><DrawingIcon /></ToolBtn>
          <Sep />
          <ToolBtn><DocMap /></ToolBtn>
          <ToolBtn><Pilcrow>¶</Pilcrow></ToolBtn>
          <Combo $w={56} $ml={2}>
            <ComboText>130%</ComboText>
            <ComboArrow />
          </Combo>
          <ToolBtn><HelpIcon /></ToolBtn>
          <Sep />
          <ToolBtn><BookIcon /></ToolBtn>
          <ReadText><u>Ч</u>тение</ReadText>
          <Chevron><ChevronMark /></Chevron>
        </Toolbar>
      </BarRow>

      <BarRow $h={25} $pt={1}>
        <Toolbar $w={721} $pb={3}>
          <Grip $h={16} />
          <ToolBtn $w={26}><StylesIcon /></ToolBtn>
          <Combo $w={98}>
            <ComboText>Обычный + 16 г</ComboText>
            <ComboArrow />
          </Combo>
          <Combo $w={125} $ml={2}>
            <ComboText>Times New Roman</ComboText>
            <ComboArrow />
          </Combo>
          <Combo $w={46} $ml={3}>
            <ComboText>16</ComboText>
            <ComboArrow />
          </Combo>
          <Sep $w={8} />
          <ToolBtn $on><GlyphBold>Ж</GlyphBold></ToolBtn>
          <ToolBtn><GlyphBold $style="italic bold">К</GlyphBold></ToolBtn>
          <ToolBtn><GlyphBold $u>Ч</GlyphBold></ToolBtn>
          <Sep />
          <ToolBtn><Align rows={[[1, 14], [1, 10], [1, 14], [1, 10], [1, 14], [1, 10]]} /></ToolBtn>
          <ToolBtn $on><Align rows={[[1, 14], [3, 10], [1, 14], [3, 10], [1, 14], [3, 10]]} /></ToolBtn>
          <ToolBtn><Align rows={[[1, 14], [5, 10], [1, 14], [5, 10], [1, 14], [5, 10]]} /></ToolBtn>
          <ToolBtn><Align rows={[[1, 14], [1, 14], [1, 14], [1, 14], [1, 14], [1, 14]]} /></ToolBtn>
          <ToolBtn $w={23}><Spacing /></ToolBtn>
          <Arrow />
          <Sep />
          <ToolBtn><Numbered /></ToolBtn>
          <ToolBtn><Bullets /></ToolBtn>
          <ToolBtn><Indent /></ToolBtn>
          <ToolBtn><Indent inc /></ToolBtn>
          <Sep />
          <ToolBtn><Borders /></ToolBtn>
          <Arrow $w={9} />
          <ToolBtn $ml={1}><Highlight /></ToolBtn>
          <Arrow />
          <ToolBtn><FontColor /></ToolBtn>
          <Arrow />
          <Chevron><ChevronMark /></Chevron>
        </Toolbar>
      </BarRow>

      <RulerRow>
        <RulerLayout>
          <TabCorner>
            <Ico w={8} h={8}>
              <path d="M2 1v5h5" fill="none" stroke="#111" strokeWidth="2" />
            </Ico>
          </TabCorner>
          <RulerBand $gray $ml={105} $w={146} />
          <RulerBand $w={812} />
          <RulerBand $gray $w={74} />
        </RulerLayout>
        <RulerDrawing />
        <SplitBox />
        <RulerScrollBtn><ScrollArrow dir="up" /></RulerScrollBtn>
      </RulerRow>

      <Main>
        <LeftStrip />
        <DocArea>
          <Page>
            <PullOffFigure />
            <TextBlock $mt={5}>
              <Line $indent>г) метод отрыв со скалыванием</Line>
              <Line $indent $just>Метод испытаний по ГОСТ 22690-88 «Бетоны. Определение прочности</Line>
              <Line>механическими методами неразрушающего контроля»</Line>
              <Line $indent>
                Прочность бетона R, МПа вычисляется по <Wavy $c="#e02020">градуировочной</Wavy> зависимости:
              </Line>
              <FormulaLine>
                <FormulaText>R = m<Sub>1</Sub> · m<Sub>2</Sub> · P,</FormulaText>
              </FormulaLine>
              <Line $indent $just>
                где <Var>m</Var><Sub>1</Sub> - <Wavy $c="#20a020">коэффициент, учитывающий</Wavy> максимальный размер крупного заполнителя
              </Line>
              <Line $indent $just>
                в зоне <Wavy $c="#e02020">вырыва</Wavy> и принимаемый равным 1 при крупности менее <Dotted>50 мм</Dotted> и 1,1 при
              </Line>
              <Line $indent>
                крупности <Dotted>50 мм</Dotted> и более;
              </Line>
              <Line $indent $just>
                <Var>m</Var><Sub>2</Sub> - коэффициент пропорциональности для перехода от усилия <Wavy $c="#e02020">вырыва</Wavy>, кН, к
              </Line>
              <Line $indent>прочности бетона, МПа по табл. 9 ГОСТ 22690-88;</Line>
              <Line $indent>
                <Wavy $c="#20a020"><Var>P</Var> </Wavy>- усилие <Wavy $c="#e02020">вырыва</Wavy> анкерного устройства, кН.
              </Line>
            </TextBlock>
            <AnchorFigure />
          </Page>
        </DocArea>
        <VScroll>
          <VTrack $h={219} />
          <VThumb>
            <Ico w={8} h={9}>
              <path d="M0 1.500h8M0 3.500h8M0 5.500h8M0 7.500h8" stroke="#5a6c88" />
            </Ico>
          </VThumb>
          <VTrack />
          <ScrollBtn><ScrollArrow dir="down" /></ScrollBtn>
          <NavBtn>
            <Ico w={9} h={9}>
              <path d="M4.500 0l3.500 4H1zM1 5.500h7M1 8h7" fill="#111" stroke="#111" strokeWidth="0.800" />
            </Ico>
          </NavBtn>
          <NavBtn>
            <Ico w={9} h={9}>
              <circle cx="4.500" cy="4.500" r="3" fill="#a8a8a8" stroke="#111" />
            </Ico>
          </NavBtn>
          <NavBtn>
            <Ico w={9} h={9}>
              <path d="M1 1h7M1 3.500h7M4.500 9L1 5h7z" fill="#111" stroke="#111" strokeWidth="0.800" />
            </Ico>
          </NavBtn>
        </VScroll>
      </Main>

      <HScroll>
        <ViewIcons>
          <ViewBtn>
            <Ico w={11} h={11}>
              <path d="M1 2.500h9M1 4.500h9M1 6.500h9M1 8.500h9" stroke="#111" />
            </Ico>
          </ViewBtn>
          <ViewBtn>
            <Ico w={11} h={11}>
              <rect x="1.500" y="1.500" width="7" height="7" fill="#fff" stroke="#111" />
              <rect x="6" y="6" width="4" height="4" fill="#2c60c0" />
            </Ico>
          </ViewBtn>
          <ViewBtn $on>
            <Ico w={11} h={11}>
              <rect x="1.500" y="1.500" width="8" height="8" fill="#fff" stroke="#111" />
              <path d="M3 4.500h5M3 6.500h5" stroke="#111" />
            </Ico>
          </ViewBtn>
          <ViewBtn>
            <Ico w={11} h={11}>
              <path d="M1 2.500h2M5 2.500h5M3 5.500h2M6 5.500h4M1 8.500h2M5 8.500h5" stroke="#333" />
            </Ico>
          </ViewBtn>
          <ViewBtn><BookIcon w={14} /></ViewBtn>
        </ViewIcons>
        <ScrollBtn><ScrollArrow dir="left" /></ScrollBtn>
        <HThumb>
          <Ico w={9} h={8}>
            <path d="M1.500 0v8M3.500 0v8M5.500 0v8M7.500 0v8" stroke="#6a7c98" />
          </Ico>
        </HThumb>
        <ScrollBtn><ScrollArrow dir="right" /></ScrollBtn>
        <HEnd />
      </HScroll>

      <StatusBar>
        <StatusCell $w={204} $pl={11}>
          <StatusPart $w={66}>Стр. 3</StatusPart>
          <StatusPart $w={83}>Разд 1</StatusPart>
          <StatusPart $w={30}>3/7</StatusPart>
        </StatusCell>
        <StatusCell $w={165} $pl={4} $off $box>
          <StatusPart $w={61}>На</StatusPart>
          <StatusPart $w={45}>Ст</StatusPart>
          <StatusPart $w={40}>Кол</StatusPart>
        </StatusCell>
        <StatusCell $w={33} $pl={8} $off $box>ЗАП</StatusCell>
        <StatusCell $w={37} $pl={5} $off $box>ИСПР</StatusCell>
        <StatusCell $w={32} $pl={5} $off $box>ВДЛ</StatusCell>
        <StatusCell $w={32} $pl={4} $off $box>ЗАМ</StatusCell>
        <StatusCell $w={66} $pl={3} $box>русский (Ро</StatusCell>
        <StatusCell $w={50} $pl={13} $box><BookIcon /></StatusCell>
        <StatusCell $w={42} $box />
        <StatusCell $w={33} $box />
        <StatusCell $w={30} $box />
      </StatusBar>

      <Taskbar>
        <StartBtn><FlagIcon />пуск</StartBtn>
        <TaskBtn $ml={9}><Folder />Толя</TaskBtn>
        <TaskBtn $ml={3} $active><WordIcon />Лекция 2 - Microsoft ...</TaskBtn>
        <TaskBtn $ml={2}><PptIcon />Microsoft PowerPoint ...</TaskBtn>
        <TaskSpacer />
        <LangBadge>EN</LangBadge>
        <Tray>
          <TrayChevron width="16" height="16" viewBox="0 0 16 16">
            <circle cx="8" cy="8" r="7" fill="#5a98e0" stroke="#cfe2f8" strokeWidth="1.500" />
            <path d="M9.500 4.500L6 8l3.500 3.500" fill="none" stroke="#fff" strokeWidth="2" />
          </TrayChevron>
          20:13
        </Tray>
      </Taskbar>
    </Win>
  );
}
